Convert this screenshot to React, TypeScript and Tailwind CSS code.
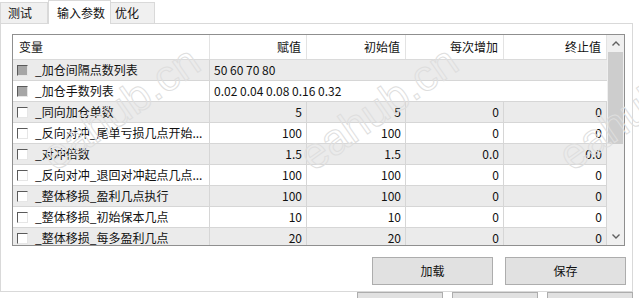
import React from "react";

type Row = {
    name: string;
    span?: string;
    disabled?: boolean;
    vals?: string[];
};

const rows: Row[] = [
    { name: "_加仓间隔点数列表", span: "50 60 70 80", disabled: true },
    { name: "_加仓手数列表", span: "0.02 0.04 0.08 0.16 0.32", disabled: true },
    { name: "_同向加仓单数", vals: ["5", "5", "0", "0"] },
    { name: "_反向对冲_尾单亏损几点开始...", vals: ["100", "100", "0", "0"] },
    { name: "_对冲倍数", vals: ["1.5", "1.5", "0.0", "0.0"] },
    { name: "_反向对冲_退回对冲起点几点...", vals: ["100", "100", "0", "0"] },
    { name: "_整体移损_盈利几点执行", vals: ["100", "100", "0", "0"] },
    { name: "_整体移损_初始保本几点", vals: ["10", "10", "0", "0"] },
    { name: "_整体移损_每多盈利几点", vals: ["20", "20", "0", "0"] },
];

const colW = ["w-[97px]", "w-[99px]", "w-[98px]", "w-[103px]"];
const headers = ["赋值", "初始值", "每次增加", "终止值"];

const CheckBox = ({ disabled }: { disabled?: boolean }) => (
    <span
        className={`inline-block w-[11px] h-[11px] shrink-0 border-t border-l border-t-[#5a5a5a] border-l-[#5a5a5a] border-b border-r border-b-[#e6e6e6] border-r-[#e6e6e6] ${disabled ? "bg-[#a6a6a6]" : "bg-white"}`}
    />
);

const Chevron = ({ down }: { down?: boolean }) => (
    <svg width="8" height="5" viewBox="0 0 8 5" className={down ? "rotate-180" : ""}>
        <path d="M0.5 4.5 L4 1 L7.5 4.5" fill="none" stroke="#606060" strokeWidth="1.4" />
    </svg>
);

const Watermark = ({ left }: { left: string }) => (
    <span
        aria-hidden
        className={`absolute top-[86px] ${left} pointer-events-none select-none text-[44px] leading-none text-transparent [-webkit-text-stroke:1px_#dedede] -rotate-[35deg] font-['Liberation_Sans',sans-serif]`}
    >
        eahub.cn
    </span>
);

export default function App() {
    return (
        <div className="relative w-[639px] h-[298px] overflow-hidden bg-white text-[12px] text-[#111] font-['Noto_Sans_CJK_SC',sans-serif]">
            {/* tabs */}
            <div className="flex items-end h-[23px]">
                <div className="w-[48px] h-[21px] pl-[7px] flex items-center bg-[#f0f0f0] border border-b-0 border-[#d9d9d9]">测试</div>
                <div className="relative z-10 -mb-px w-[63px] h-[24px] pl-[8px] flex items-center bg-white border border-b-0 border-[#d9d9d9]">输入参数</div>
                <div className="w-[44px] h-[21px] pl-[4px] flex items-center bg-[#f0f0f0] border border-b-0 border-l-0 border-[#d9d9d9]">优化</div>
            </div>

            {/* tab page */}
            <div className="w-[633px] h-[269px] border border-[#d9d9d9] bg-white pt-[10px]">
                <div className="ml-[11px] w-[613px] h-[212px] border border-[#8f8f8f] flex">
                    <div className="flex-1 overflow-hidden">
                        {/* header */}
                        <div className="flex h-[25px] border-b border-[#dadada] bg-white">
                            <div className="w-[197px] border-r border-[#e3e3e3] pl-[6px] flex items-center">变量</div>
                            {headers.map((h, i) => (
                                <div key={i} className={`${colW[i]} border-r border-[#e3e3e3] pr-[5px] flex items-center justify-end`}>
                                    {h}
                                </div>
                            ))}
                        </div>
                        {/* body */}
                        {rows.map((r, ri) => (
                            <div key={ri} className={`flex h-[21px] border-b border-[#d6d6d6] ${ri % 2 === 0 ? "bg-[#ebebeb]" : "bg-white"}`}>
                                <div className="w-[197px] border-r border-[#d6d6d6] pl-[4px] flex items-center gap-[7px]">
                                    <CheckBox disabled={r.disabled} />
                                    <span className="whitespace-nowrap">{r.name}</span>
                                </div>
                                {r.span ? (
                                    <div className="w-[397px] pl-[4px] flex items-center whitespace-nowrap">{r.span}</div>
                                ) : (
                                    r.vals!.map((v, i) => (
                                        <div key={i} className={`${colW[i]} border-r border-[#d6d6d6] pr-[4px] flex items-center justify-end`}>
                                            {v}
                                        </div>
                                    ))
                                )}
                            </div>
                        ))}
                    </div>
                    {/* scrollbar */}
                    <div className="w-[17px] bg-[#f0f0f0] flex flex-col">
                        <div className="h-[17px] flex items-center justify-center">
                            <Chevron />
                        </div>
                        <div className="flex-1 flex flex-col">
                            <div className="h-[92px] mx-[1px] bg-[#cdcdcd]" />
                        </div>
                        <div className="h-[17px] flex items-center justify-center">
                            <Chevron down />
                        </div>
                    </div>
                </div>

                {/* buttons */}
                <div className="flex justify-end gap-[12px] pr-[6px] mt-[11px]">
                    <button className="w-[121px] h-[28px] bg-[#e1e1e1] border border-[#adadad]">加载</button>
                    <button className="w-[121px] h-[28px] bg-[#e1e1e1] border border-[#adadad]">保存</button>
                </div>
            </div>

            {/* bottom buttons (cut off) */}
            <div className="flex justify-end gap-[9px] pr-[6px]">
                <div className="w-[86px] h-[24px] bg-[#e1e1e1] border border-[#adadad]" />
                <div className="w-[86px] h-[24px] bg-[#e1e1e1] border border-[#adadad]" />
                <div className="w-[86px] h-[24px] bg-[#e1e1e1] border border-[#adadad]" />
            </div>

            {/* watermark */}
            <Watermark left="left-[30px]" />
            <Watermark left="left-[288px]" />
            <Watermark left="left-[547px]" />
        </div>
    );
}
